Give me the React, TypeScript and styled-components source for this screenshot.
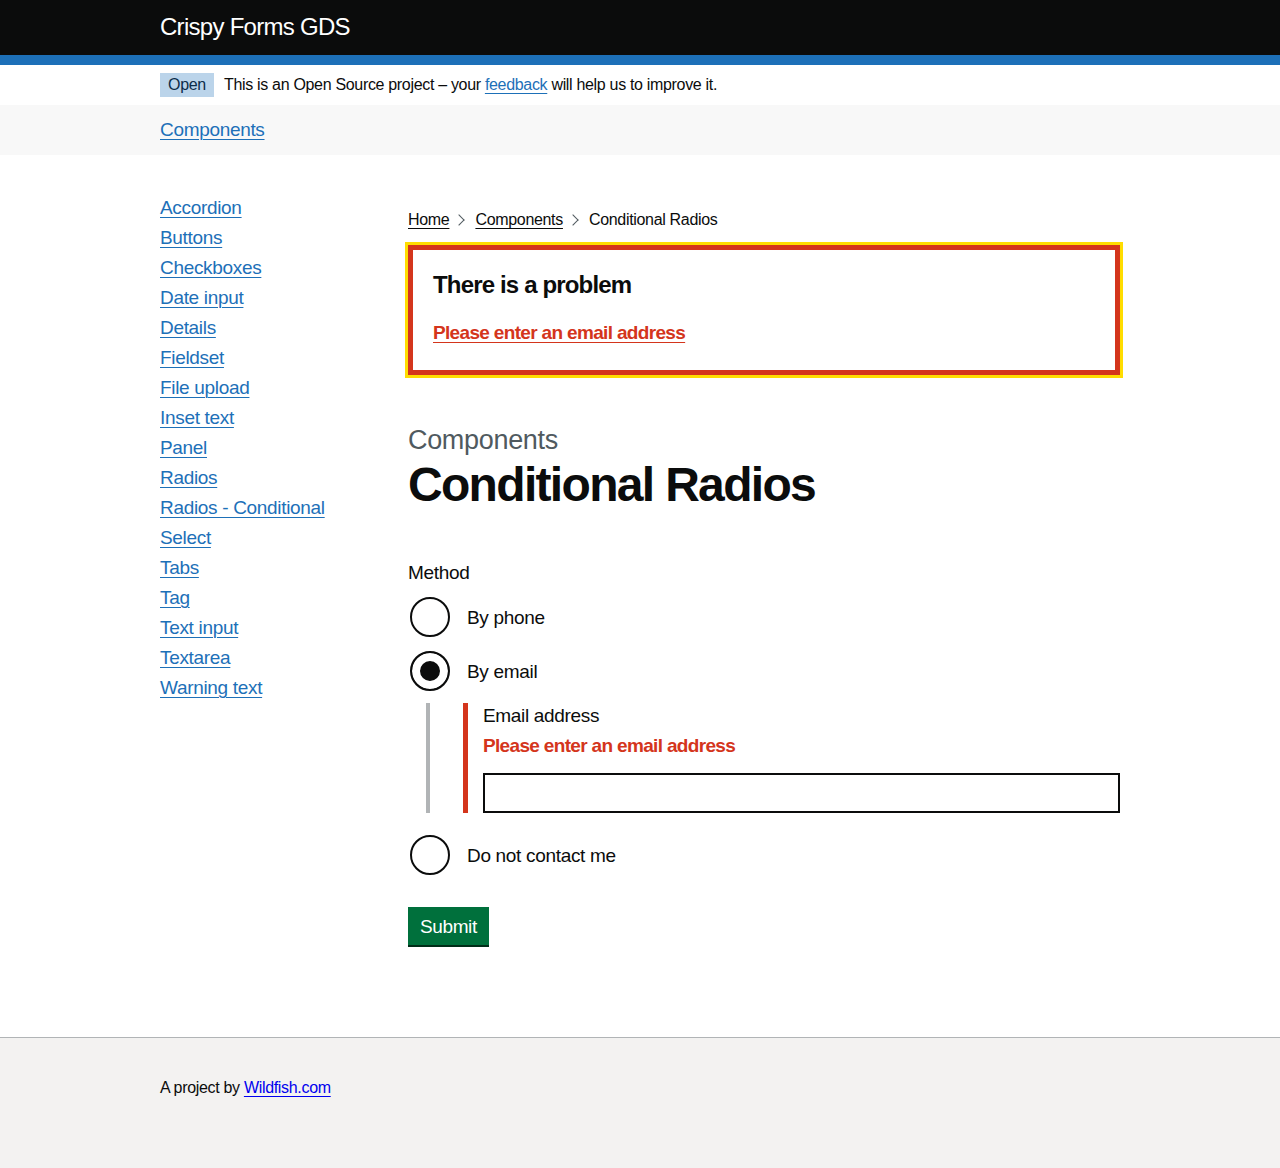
import React from "react";
import styled, { createGlobalStyle } from "styled-components";

const GlobalStyle = createGlobalStyle`
  html, body { margin: 0; padding: 0; }
  body {
    font-family: "Liberation Sans", Arial, sans-serif;
    color: #0b0c0c;
    background: #ffffff;
    letter-spacing: -0.02em;
    -webkit-font-smoothing: antialiased;
  }
  #root { min-height: 100vh; display: flex; flex-direction: column; }
  * { box-sizing: border-box; }
`;

const Container = styled.div`
  width: 960px;
  margin: 0 auto;
`;

const Header = styled.header`
  background: #0b0c0c;
  border-bottom: 10px solid #1d70b8;
`;

const HeaderInner = styled(Container)`
  height: 55px;
  padding-top: 12px;
`;

const ServiceName = styled.a`
  color: #ffffff;
  text-decoration: none;
  font-size: 24px;
  line-height: 30px;
  letter-spacing: -0.03em;
`;

const PhaseBanner = styled.div`
  background: #ffffff;
`;

const PhaseInner = styled(Container)`
  display: flex;
  align-items: center;
  gap: 10px;
  height: 40px;
  font-size: 16px;
  line-height: 20px;
`;

const Tag = styled.strong`
  display: inline-flex;
  align-items: center;
  justify-content: center;
  width: 54px;
  height: 24px;
  background: #bbd4ea;
  color: #0c2d4a;
  font-weight: 400;
  font-size: 16px;
`;

const Link = styled.a<{ $tone?: "blue" | "black" | "red" | "plain" }>`
  color: ${(p) =>
    p.$tone === "black"
      ? "#0b0c0c"
      : p.$tone === "red"
      ? "#d4351c"
      : p.$tone === "plain"
      ? "#0000ee"
      : "#1d70b8"};
  text-decoration: underline;
  text-decoration-thickness: 1px;
  text-underline-offset: 0.1578em;
`;

const NavBar = styled.nav`
  background: #f8f8f8;
`;

const NavInner = styled(Container)`
  padding: 12px 0 13px;
  font-size: 19px;
  line-height: 25px;
`;

const Main = styled(Container)`
  display: grid;
  grid-template-columns: 232px 712px;
  column-gap: 16px;
  align-items: start;
  padding: 40px 0 60px;
`;

const SideList = styled.ul`
  list-style: none;
  margin: 0;
  padding: 0;
  display: flex;
  flex-direction: column;
  gap: 5px;
  font-size: 19px;
  line-height: 25px;
`;

const Content = styled.div`
  display: flex;
  flex-direction: column;
`;

const Breadcrumbs = styled.ol`
  list-style: none;
  margin: 15px 0 0;
  padding: 0;
  display: flex;
  align-items: center;
  font-size: 16px;
  line-height: 20px;
`;

const Crumb = styled.li<{ $first?: boolean }>`
  display: inline-flex;
  align-items: center;
  &::before {
    content: "";
    display: ${(p) => (p.$first ? "none" : "inline-block")};
    width: 7px;
    height: 7px;
    border-top: 1px solid #505a5f;
    border-right: 1px solid #505a5f;
    transform: rotate(45deg);
    margin: 0 12px 0 6px;
  }
`;

const ErrorSummary = styled.div`
  margin-top: 15px;
  margin-bottom: 50px;
  padding: 20px 20px 25px;
  border: 5px solid #d4351c;
  outline: 3px solid #ffdd00;
`;

const SummaryTitle = styled.h2`
  margin: 0 0 20px;
  font-size: 24px;
  line-height: 30px;
  font-weight: 700;
  letter-spacing: -0.035em;
`;

const SummaryList = styled.ul`
  list-style: none;
  margin: 0;
  padding: 0;
  font-size: 19px;
  line-height: 25px;
  font-weight: 700;
  letter-spacing: -0.035em;
`;

const Caption = styled.span`
  display: block;
  color: #505a5f;
  font-size: 27px;
  line-height: 30px;
  margin-bottom: 5px;
`;

const Heading = styled.h1`
  margin: 0 0 50px;
  font-size: 48px;
  line-height: 50px;
  font-weight: 700;
  letter-spacing: -0.035em;
`;

const Fieldset = styled.fieldset`
  border: 0;
  margin: 0 0 30px;
  padding: 0;
  min-width: 0;
`;

const Legend = styled.legend`
  padding: 0;
  margin-bottom: 10px;
  font-size: 19px;
  line-height: 25px;
`;

const Radios = styled.div`
  display: flex;
  flex-direction: column;
`;

const RadioItem = styled.label`
  display: flex;
  align-items: center;
  min-height: 44px;
  margin-bottom: 10px;
  cursor: pointer;
  &:last-child { margin-bottom: 0; }
`;

const RadioInput = styled.input`
  appearance: none;
  -webkit-appearance: none;
  flex: none;
  width: 40px;
  height: 40px;
  margin: 2px;
  border: 2px solid #0b0c0c;
  border-radius: 50%;
  background: #ffffff;
  &:checked {
    background: #0b0c0c;
    box-shadow: inset 0 0 0 8px #ffffff;
  }
`;

const RadioLabel = styled.span`
  padding: 0 15px;
  font-size: 19px;
  line-height: 25px;
`;

const Conditional = styled.div`
  margin: 0 0 20px 18px;
  padding-left: 33px;
  border-left: 4px solid #b1b4b6;
`;

const FormGroupError = styled.div`
  padding-left: 15px;
  border-left: 5px solid #d4351c;
  display: flex;
  flex-direction: column;
`;

const FieldLabel = styled.label`
  font-size: 19px;
  line-height: 25px;
  margin-bottom: 5px;
`;

const ErrorMessage = styled.p`
  margin: 0 0 15px;
  color: #d4351c;
  font-size: 19px;
  line-height: 25px;
  font-weight: 700;
  letter-spacing: -0.035em;
`;

const TextInput = styled.input`
  width: 100%;
  height: 40px;
  margin: 0;
  padding: 5px;
  border: 2px solid #0b0c0c;
  border-radius: 0;
  font: inherit;
  font-size: 19px;
`;

const Button = styled.button`
  align-self: flex-start;
  margin: 0 0 32px;
  padding: 8px 10px 7px;
  border: 2px solid transparent;
  border-radius: 0;
  background: #00703c;
  color: #ffffff;
  box-shadow: 0 2px 0 #002d18;
  font-family: "Liberation Sans", Arial, sans-serif;
  font-size: 19px;
  line-height: 19px;
  letter-spacing: -0.02em;
  cursor: pointer;
`;

const Form = styled.form`
  display: flex;
  flex-direction: column;
`;

const Footer = styled.footer`
  flex: 1;
  background: #f3f2f1;
  border-top: 1px solid #b1b4b6;
`;

const FooterInner = styled(Container)`
  padding: 40px 0 25px;
  font-size: 16px;
  line-height: 20px;
`;

const sideLinks = [
  "Accordion",
  "Buttons",
  "Checkboxes",
  "Date input",
  "Details",
  "Fieldset",
  "File upload",
  "Inset text",
  "Panel",
  "Radios",
  "Radios - Conditional",
  "Select",
  "Tabs",
  "Tag",
  "Text input",
  "Textarea",
  "Warning text",
];

export default function App() {
  return (
    <>
      <GlobalStyle />
      <Header>
        <HeaderInner>
          <ServiceName href="#">Crispy Forms GDS</ServiceName>
        </HeaderInner>
      </Header>
      <PhaseBanner>
        <PhaseInner>
          <Tag>Open</Tag>
          <span>
            This is an Open Source project – your <Link href="#">feedback</Link> will help us to improve it.
          </span>
        </PhaseInner>
      </PhaseBanner>
      <NavBar>
        <NavInner>
          <Link href="#">Components</Link>
        </NavInner>
      </NavBar>
      <Main>
        <nav>
          <SideList>
            {sideLinks.map((l) => (
              <li key={l}>
                <Link href="#">{l}</Link>
              </li>
            ))}
          </SideList>
        </nav>
        <Content>
          <Breadcrumbs>
            <Crumb $first>
              <Link $tone="black" href="#">Home</Link>
            </Crumb>
            <Crumb>
              <Link $tone="black" href="#">Components</Link>
            </Crumb>
            <Crumb>Conditional Radios</Crumb>
          </Breadcrumbs>
          <ErrorSummary role="alert">
            <SummaryTitle>There is a problem</SummaryTitle>
            <SummaryList>
              <li>
                <Link $tone="red" href="#">Please enter an email address</Link>
              </li>
            </SummaryList>
          </ErrorSummary>
          <Caption>Components</Caption>
          <Heading>Conditional Radios</Heading>
          <Form onSubmit={(e) => e.preventDefault()}>
            <Fieldset>
              <Legend>Method</Legend>
              <Radios>
                <RadioItem>
                  <RadioInput type="radio" name="method" value="phone" />
                  <RadioLabel>By phone</RadioLabel>
                </RadioItem>
                <RadioItem>
                  <RadioInput type="radio" name="method" value="email" defaultChecked />
                  <RadioLabel>By email</RadioLabel>
                </RadioItem>
                <Conditional>
                  <FormGroupError>
                    <FieldLabel htmlFor="email">Email address</FieldLabel>
                    <ErrorMessage>Please enter an email address</ErrorMessage>
                    <TextInput id="email" type="email" />
                  </FormGroupError>
                </Conditional>
                <RadioItem>
                  <RadioInput type="radio" name="method" value="none" />
                  <RadioLabel>Do not contact me</RadioLabel>
                </RadioItem>
              </Radios>
            </Fieldset>
            <Button type="submit">Submit</Button>
          </Form>
        </Content>
      </Main>
      <Footer>
        <FooterInner>
          A project by <Link $tone="plain" href="#">Wildfish.com</Link>
        </FooterInner>
      </Footer>
    </>
  );
}
